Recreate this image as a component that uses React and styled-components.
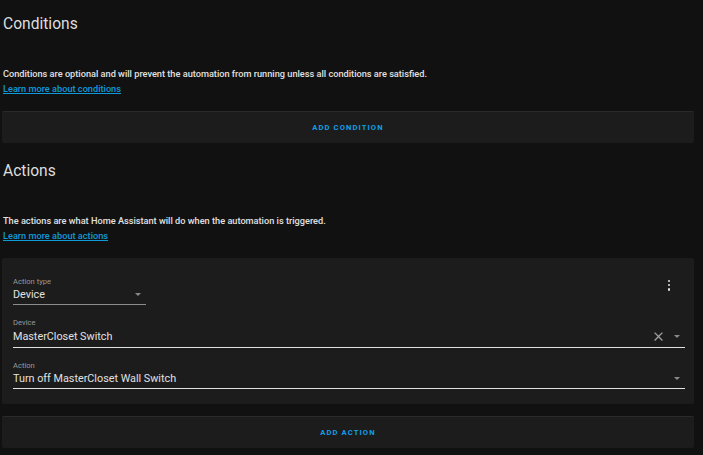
import React from 'react'
import styled, {createGlobalStyle} from 'styled-components'

const GlobalStyle = createGlobalStyle`
    body {
        margin: 0;
        background: #111111;
        font-family: Roboto, "Noto Sans", sans-serif;
        color: #e1e1e1;
    }
`

const Page = styled.div`
    width: 692px;
    padding: 0 9px 0 2px;
    display: flex;
    flex-direction: column;
`

const Heading = styled.h2`
    margin: ${({first}) => first ? '13.5px' : '18px'} 0 0 1px;
    font-size: 15.6px;
    line-height: 20px;
    font-weight: 400;
    color: #dedede;
`

const Description = styled.p`
    margin: 32px 0 0 1px;
    font-size: 9.2px;
    line-height: 15px;
    font-weight: 500;
    color: #e1e1e1;
`

const Link = styled.a`
    color: #0f9ad9;
    text-decoration: underline;
`

const Card = styled.div`
    margin-top: ${({gap}) => gap || '15px'};
    background: #1c1c1c;
    border-top: 1px solid #2a2a2a;
    border-radius: 2px;
`

const ButtonCard = styled(Card)`
    height: 31px;
    display: flex;
    align-items: center;
    justify-content: center;
`

const TextButton = styled.button`
    background: none;
    border: none;
    padding: 0;
    font-family: inherit;
    font-size: 7.6px;
    font-weight: 700;
    letter-spacing: 1.1px;
    color: #129fea;
    cursor: pointer;
`

const ActionCard = styled(Card)`
    border-top: none;
    padding: 19px 9px 15px 11px;
    display: flex;
    flex-direction: column;
    gap: 13px;
`

const Row = styled.div`
    display: flex;
    justify-content: space-between;
    align-items: flex-start;
`

const Field = styled.div`
    width: ${({width}) => width || 'auto'};
`

const Label = styled.div`
    font-size: 7.6px;
    line-height: 9px;
    color: #9a9a9a;
`

const Value = styled.div`
    display: flex;
    align-items: center;
    font-size: 10.8px;
    line-height: 13px;
    color: #e1e1e1;
    padding: ${({tall}) => tall ? '3px 0 4px' : '2px 0 3px'};
    border-bottom: 1px solid ${({dim}) => dim ? '#8c8c8c' : '#e1e1e1'};
`

const ValueText = styled.span`
    flex: 1;
`

const Arrow = styled.span`
    width: 0;
    height: 0;
    margin-right: 5px;
    border-left: 3.5px solid transparent;
    border-right: 3.5px solid transparent;
    border-top: 3.5px solid #8a8a8a;
`

const Clear = styled.svg`
    width: 15px;
    height: 15px;
    margin: -1px 8.5px -1px 0;
`

const MenuButton = styled.div`
    display: flex;
    flex-direction: column;
    gap: 2px;
    margin: 3px 15px 0 0;
    span {
        width: 2.4px;
        height: 2.4px;
        background: #e1e1e1;
        border-radius: 1px;
    }
`

export default function App() {
    return (
        <>
            <GlobalStyle />
            <Page>
                <Heading first>Conditions</Heading>
                <Description>
                    Conditions are optional and will prevent the automation from running unless all conditions are satisfied.
                    <br />
                    <Link href="#">Learn more about conditions</Link>
                </Description>
                <ButtonCard>
                    <TextButton>ADD CONDITION</TextButton>
                </ButtonCard>

                <Heading>Actions</Heading>
                <Description>
                    The actions are what Home Assistant will do when the automation is triggered.
                    <br />
                    <Link href="#">Learn more about actions</Link>
                </Description>
                <ActionCard>
                    <Row>
                        <Field width="133px">
                            <Label>Action type</Label>
                            <Value dim>
                                <ValueText>Device</ValueText>
                                <Arrow />
                            </Value>
                        </Field>
                        <MenuButton>
                            <span /><span /><span />
                        </MenuButton>
                    </Row>
                    <Field>
                        <Label>Device</Label>
                        <Value tall>
                            <ValueText>MasterCloset Switch</ValueText>
                            <Clear viewBox="0 0 24 24">
                                <path d="M19 6.41 17.59 5 12 10.59 6.41 5 5 6.41 10.59 12 5 17.59 6.41 19 12 13.41 17.59 19 19 17.59 13.41 12z" fill="#a0a0a0" />
                            </Clear>
                            <Arrow />
                        </Value>
                    </Field>
                    <Field>
                        <Label>Action</Label>
                        <Value>
                            <ValueText>Turn off MasterCloset Wall Switch</ValueText>
                            <Arrow />
                        </Value>
                    </Field>
                </ActionCard>
                <ButtonCard gap="12px">
                    <TextButton>ADD ACTION</TextButton>
                </ButtonCard>
            </Page>
        </>
    )
}
